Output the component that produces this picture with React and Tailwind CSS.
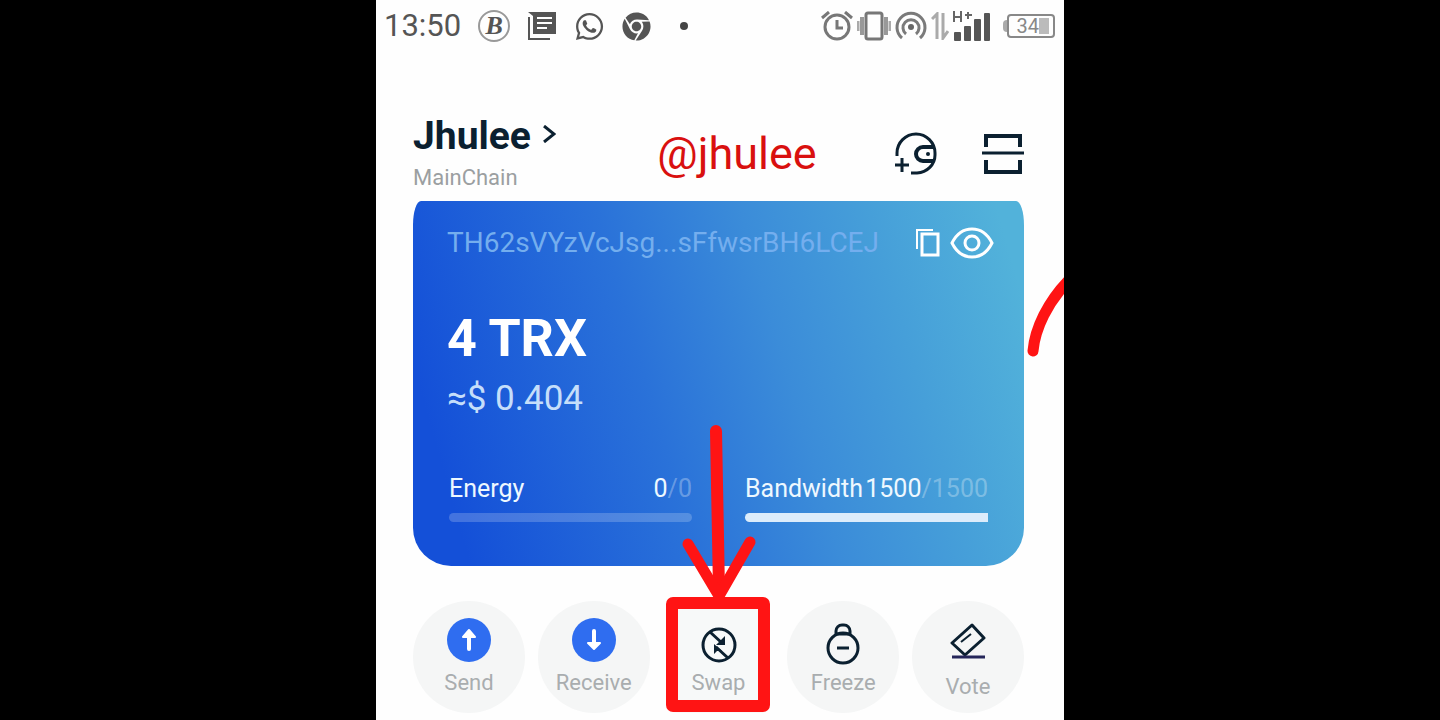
import React, { useState } from 'react'
import { FaWhatsapp, FaChrome } from "react-icons/fa";


const NewsIcon = () => (
    <svg width="30" height="30" viewBox="0 0 30 30" aria-hidden="true">
        <path d="M2 6V28H23" fill="none" stroke="#555" strokeWidth="2" />
        <path d="M1 1H29V23H6V5Z" fill="#555" />
        <path d="M10 7H25M10 12H25M10 17H20" stroke="#fff" strokeWidth="2" />
    </svg>
)

const AlarmIcon = () => (
    <svg width="32" height="30" viewBox="0 0 32 30" fill="none" stroke="#777" aria-hidden="true">
        <circle cx="16" cy="16" r="12" strokeWidth="3" />
        <path d="M16 9V17H22" strokeWidth="3" />
        <path d="M1 7L8 1M31 7L24 1" strokeWidth="3" />
    </svg>
)

const VibrateIcon = () => (
    <svg width="34" height="30" viewBox="0 0 34 30" fill="none" stroke="#777" aria-hidden="true">
        <rect x="9" y="2" width="16" height="26" rx="2" strokeWidth="3" />
        <path d="M5 6V24M29 6V24" stroke="#999" strokeWidth="4" />
        <path d="M1 10V20M33 10V20" stroke="#aaa" strokeWidth="3" />
    </svg>
)

const HotspotIcon = () => (
    <svg width="32" height="30" viewBox="0 0 32 30" fill="none" stroke="#7a7a7a" strokeWidth="3" aria-hidden="true">
        <path d="M7 27A14 14 0 1 1 25 27" />
        <path d="M11 23A8 8 0 1 1 21 23" />
        <circle cx="16" cy="16" r="3" fill="#666" stroke="none" />
    </svg>
)

const DataIcon = () => (
    <svg width="18" height="28" viewBox="0 0 18 28" fill="none" stroke="#aaa" aria-hidden="true">
        <path d="M1 7L6 2V27" strokeWidth="3" />
        <path d="M12 1V26L17 19" strokeWidth="3" />
    </svg>
)

const SignalIcon = () => (
    <svg width="38" height="30" viewBox="0 0 38 30" aria-hidden="true">
        <path d="M1 0V11M8 0V11M1 6H8M12 4H19M15 1V8" stroke="#666" strokeWidth="2" fill="none" />
        <rect x="1" y="21" width="7" height="9" rx="1" fill="#555" />
        <rect x="11" y="15" width="7" height="15" rx="1" fill="#555" />
        <rect x="21" y="8" width="7" height="22" rx="1" fill="#555" />
        <rect x="31" y="2" width="6" height="28" rx="1" fill="#555" />
    </svg>
)

const WalletAddIcon = () => (
    <svg width="44" height="44" viewBox="0 0 44 44" fill="none" stroke="#0b2030" strokeWidth="3" aria-hidden="true">
        <path d="M3 24V21A19 19 0 0 1 41 21V23A19 18 0 0 1 23 41H17" />
        <path d="M41 15H29A7 7 0 0 0 22 22A7 7 0 0 0 29 29H40" strokeWidth="4" />
        <circle cx="34" cy="22" r="2" fill="#0b2030" stroke="none" />
        <path d="M1 33H15M8 26V40" />
    </svg>
)

const ScanIcon = () => (
    <svg width="42" height="42" viewBox="0 0 42 42" fill="none" stroke="#0b2030" strokeWidth="4" aria-hidden="true">
        <path d="M0 20H42" strokeWidth="3" />
        <path d="M4 14V3H38V14M4 27V39H38V27" />
    </svg>
)

const CopyIcon = () => (
    <svg width="24" height="28" viewBox="0 0 24 28" fill="none" stroke="#fff" strokeWidth="2" aria-hidden="true">
        <path d="M1 20V1H17" />
        <rect x="6" y="5" width="16" height="21" strokeWidth="3" />
    </svg>
)

const EyeIcon = () => (
    <svg width="44" height="32" viewBox="0 0 44 32" fill="none" stroke="#fff" strokeWidth="3" aria-hidden="true">
        <path d="M2 16C6 8 13 2 22 2S38 8 42 16C38 24 31 30 22 30S6 24 2 16Z" />
        <circle cx="22" cy="16" r="7" />
    </svg>
)

const SendIcon = () => (
    <svg width="44" height="44" viewBox="0 0 44 44" aria-hidden="true">
        <circle cx="22" cy="22" r="22" fill="#2f6df0" />
        <path d="M22 31V16" stroke="#fff" strokeWidth="4" strokeLinecap="round" />
        <path d="M22 12L28 19H16Z" fill="#fff" stroke="#fff" strokeWidth="2" strokeLinejoin="round" />
    </svg>
)

const ReceiveIcon = () => (
    <svg width="44" height="44" viewBox="0 0 44 44" aria-hidden="true">
        <circle cx="22" cy="22" r="22" fill="#2f6df0" />
        <path d="M22 13V27" stroke="#fff" strokeWidth="4" strokeLinecap="round" />
        <path d="M22 31L28 25H16Z" fill="#fff" stroke="#fff" strokeWidth="2" strokeLinejoin="round" />
    </svg>
)

const SwapIcon = () => (
    <svg width="36" height="36" viewBox="0 0 36 36" fill="none" stroke="#0b2030" strokeWidth="3" aria-hidden="true">
        <circle cx="18" cy="18" r="16" />
        <path d="M9 5L21 16M15 20L27 31" />
        <path d="M24 9V18H15Z" fill="#0b2030" stroke="none" />
        <path d="M13 27V17L21 24H16Z" fill="#0b2030" stroke="none" />
    </svg>
)

const FreezeIcon = () => (
    <svg width="36" height="42" viewBox="0 0 36 42" fill="none" stroke="#0b2030" strokeWidth="3" aria-hidden="true">
        <circle cx="18" cy="25" r="15" />
        <path d="M11 11V8A6 6 0 0 1 17 2H19A6 6 0 0 1 25 8V11Z" />
        <path d="M12 25H24" />
    </svg>
)

const VoteIcon = () => (
    <svg width="36" height="36" viewBox="0 0 36 36" fill="none" stroke="#0b2030" strokeWidth="3" aria-hidden="true">
        <path d="M22 2L34 15L15 32L2 20Z" strokeLinejoin="round" />
        <path d="M11 19L21 11" strokeWidth="2" />
        <path d="M2 34H35" stroke="#25265a" />
    </svg>
)

const actions = [
    { name: "Send", icon: <SendIcon />, style: "w-28 rounded-full pt-[17px] pb-4 bg-[#f5f6f6]" },
    { name: "Receive", icon: <ReceiveIcon />, style: "w-28 rounded-full pt-[17px] pb-4 bg-[#f5f6f6]" },
    { name: "Swap", icon: <SwapIcon />, style: "w-[100px] rounded-lg pt-[26px] pb-4 bg-[#f7f9f9]" },
    { name: "Freeze", icon: <FreezeIcon />, style: "w-28 rounded-full pt-[22px] pb-4 bg-[#f5f6f6]" },
    { name: "Vote", icon: <VoteIcon />, style: "w-28 rounded-full pt-[22px] pb-3 bg-[#f5f6f6]" },
];

const StatusBar = () => {
    return (
        <div className="flex h-[52px] items-center justify-between pl-2 pr-[9px] text-[#555]">
            <div className="flex items-center gap-[17px]">
                <span className="text-[31px] leading-8">13:50</span>
                <span className="flex size-8 items-center justify-center rounded-full border-2 border-[#999] font-['Liberation_Serif',serif] text-[26px] font-bold italic leading-6">
                    B
                </span>
                <NewsIcon />
                <FaWhatsapp size={31} />
                <FaChrome size={29} />
                <span className="ml-3 size-2 rounded-full bg-[#444]"></span>
            </div>
            <div className="flex items-center gap-1">
                <AlarmIcon />
                <VibrateIcon />
                <HotspotIcon />
                <DataIcon />
                <SignalIcon />
                {/* battery */}
                <div className="ml-2 flex items-center">
                    <span className="h-3 w-1 rounded-l-sm bg-[#aaa]"></span>
                    <div className="flex h-6 w-12 items-center justify-end rounded-sm border-2 border-[#888] pr-1 text-[20px] leading-5 text-[#888]">
                        34
                        <span className="h-4 w-[10px] bg-[#bbb]"></span>
                    </div>
                </div>
            </div>
        </div>
    )
}

const Header = () => {
    return (
        <header className="flex items-start justify-between pl-[37px] pr-10 pt-16">
            <div>
                <button className="flex items-center gap-3 text-[#0b2030]">
                    <span className="text-[39px] font-bold leading-10">Jhulee</span>
                    <svg width="13" height="18" viewBox="0 0 13 18" className="-mt-1" aria-hidden="true">
                        <path d="M1 1L11 9L1 17" fill="none" stroke="#0b2030" strokeWidth="3" />
                    </svg>
                </button>
                <p className="mt-2 text-[22px] leading-7 text-[#9b9fa1]">MainChain</p>
            </div>
            <p className="ml-6 pt-[14px] text-[45px] leading-12 text-[#d9100f]">@jhulee</p>
            <div className="flex items-center gap-11 pt-4">
                <button aria-label="Add wallet"><WalletAddIcon /></button>
                <button aria-label="Scan"><ScanIcon /></button>
            </div>
        </header>
    )
}

const Resource = ({ name, used, total, barStyle }) => {
    return (
        <div className="flex-1">
            <div className="flex justify-between text-[25px] leading-8 text-[#eef8ff]">
                <span>{name}</span>
                <span>
                    {used}<span className="text-white/30">/{total}</span>
                </span>
            </div>
            <div className={`mt-2 h-[9px] ${barStyle}`}></div>
        </div>
    )
}

const WalletCard = () => {
    const [visible, setVisible] = useState(true)

    return (
        <section className="ml-[37px] mr-10 h-[365px] rounded-t-[8px_24px] rounded-b-[38px] bg-linear-[74deg,#1450d8_8%,#2a72d9_40%,#3b8cd9_60%,#469fd9_78%,#52b2da_96%] px-[34px] pr-[30px] pt-6">
            <div className="flex items-center justify-between">
                <span className="text-[28px] leading-9 text-[#74aeee]">TH62sVYzVcJsg...sFfwsrBH6LCEJ</span>
                <div className="flex items-center gap-[10px]">
                    <button aria-label="Copy address"><CopyIcon /></button>
                    <button aria-label="Show balance" onClick={() => setVisible(!visible)}><EyeIcon /></button>
                </div>
            </div>
            <h1 className="mt-[50px] text-[52px] font-bold leading-14 text-white">{visible ? "4 TRX" : "****"}</h1>
            <p className="mt-3 text-[35px] leading-10 text-[#c5defa]">{visible ? "≈$ 0.404" : "****"}</p>
            <div className="mt-[54px] flex gap-[53px] pl-0.5 pr-[6px]">
                <Resource name="Energy" used="0" total="0" barStyle="rounded-full bg-white/20" />
                <Resource name="Bandwidth" used="1500" total="1500" barStyle="rounded-l-full bg-[#dcecfb]" />
            </div>
        </section>
    )
}

// hand drawn arrow and frame around the swap button
const Marks = () => (
    <svg viewBox="0 0 688 720" className="pointer-events-none absolute left-0 top-0 w-full" fill="none" stroke="#ff1414" strokeLinecap="round" aria-hidden="true">
        <path d="M340 431L343 590" strokeWidth="12" />
        <path d="M312 544L343 596L374 542" strokeWidth="11" strokeLinejoin="round" />
        <path d="M657 351C659 328 672 302 692 281" strokeWidth="11" />
        <rect x="296" y="603" width="92" height="103" rx="1" strokeWidth="12" strokeLinejoin="round" />
    </svg>
)

const App = () => {
    return (
        <div className="min-h-screen bg-black font-['Roboto',sans-serif]">
            <main className="relative mx-auto min-h-screen max-w-[688px] overflow-hidden bg-[#fefefe]">
                <StatusBar />
                <Header />
                <div className="mt-[9px]">
                    <WalletCard />
                </div>
                <nav className="mt-[35px] ml-[37px] mr-10 flex justify-between">
                    {actions.map((item) => (
                        <div key={item.name} className="flex w-28 justify-center">
                            <button className={`flex h-28 flex-col items-center justify-between text-[22px] leading-7 text-[#a9adaf] ${item.style}`}>
                                {item.icon}
                                <span>{item.name}</span>
                            </button>
                        </div>
                    ))}
                </nav>
                <Marks />
            </main>
        </div>
    )
}

export default App
